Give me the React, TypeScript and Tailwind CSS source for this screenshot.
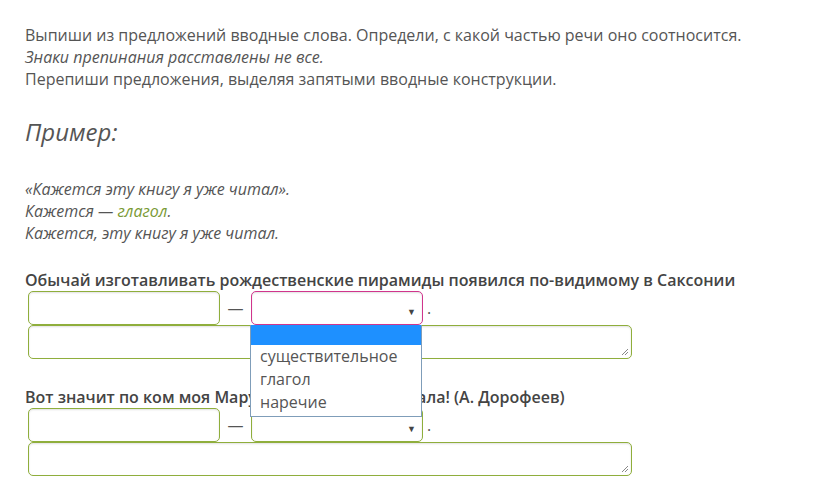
import React from 'react'

const inputCls =
  "h-[34px] rounded-[5px] border border-[#8fae3c] bg-white shadow-[inset_0_1px_2px_rgba(0,0,0,0.12)] outline-none"

function Question({ text, open }: { text: React.ReactNode; open?: boolean }) {
  return (
    <div>
      <p className="font-semibold text-[#444]">{text}</p>
      <div className="relative flex items-center">
        <input className={`${inputCls} ml-[3px] w-[192px]`} />
        <span className="w-[31px] text-center text-[#555]">—</span>
        <div
          className={`relative h-[34px] w-[172px] rounded-[5px] border bg-white shadow-[inset_0_1px_2px_rgba(0,0,0,0.12)] ${
            open ? 'border-[#d0358c]' : 'border-[#8fae3c]'
          }`}
        >
          <span className="absolute right-[6px] top-[9px] text-[9px] text-[#444]">▼</span>
        </div>
        <span className="ml-[4px] text-[#555]">.</span>
        {open && (
          <div className="absolute left-[225px] top-[34px] z-10 w-[172px] border border-t-0 border-[#7f9db9] bg-white text-[16px] leading-[23px] text-[#555]">
            <div className="h-[20px] bg-[#1e90ff]" />
            <div className="pl-[9px]">существительное</div>
            <div className="pl-[9px]">глагол</div>
            <div className="pl-[9px] pb-[2px]">наречие</div>
          </div>
        )}
      </div>
      <div className="relative ml-[3px] w-[604px]">
        <textarea className={`${inputCls} block w-full resize-none`} rows={1} />
        <svg className="absolute bottom-[3px] right-[3px]" width="8" height="8" viewBox="0 0 8 8">
          <path d="M7 1L1 7M7 4L4 7" stroke="#888" strokeWidth="1" />
        </svg>
      </div>
    </div>
  )
}

export default function App() {
  return (
    <div className="min-h-[489px] bg-white pl-[25px] pt-[24px] font-['Open_Sans',sans-serif] text-[16px] leading-[22px] text-[#555]">
      <p>Выпиши из предложений вводные слова. Определи, с какой частью речи оно соотносится.</p>
      <p className="italic">Знаки препинания расставлены не все.</p>
      <p>Перепиши предложения, выделяя запятыми вводные конструкции.</p>

      <h3 className="mt-[27px] text-[24px] italic leading-[30px] text-[#555]">Пример:</h3>

      <div className="mt-[31px] italic">
        <p>«Кажется эту книгу я уже читал».</p>
        <p>
          Кажется — <span className="text-[#7a9a35]">глагол</span>.
        </p>
        <p>Кажется, эту книгу я уже читал.</p>
      </div>

      <div className="mt-[25px]">
        <Question text="Обычай изготавливать рождественские пирамиды появился по-видимому в Саксонии" open />
      </div>
      <div className="mt-[27px]">
        <Question
          text={
            <>
              Вот значит по ком моя Мару<span className="tracking-[0.2px]">ся всё время вздых</span>ала! (А. Дорофеев)
            </>
          }
        />
      </div>
    </div>
  )
}
